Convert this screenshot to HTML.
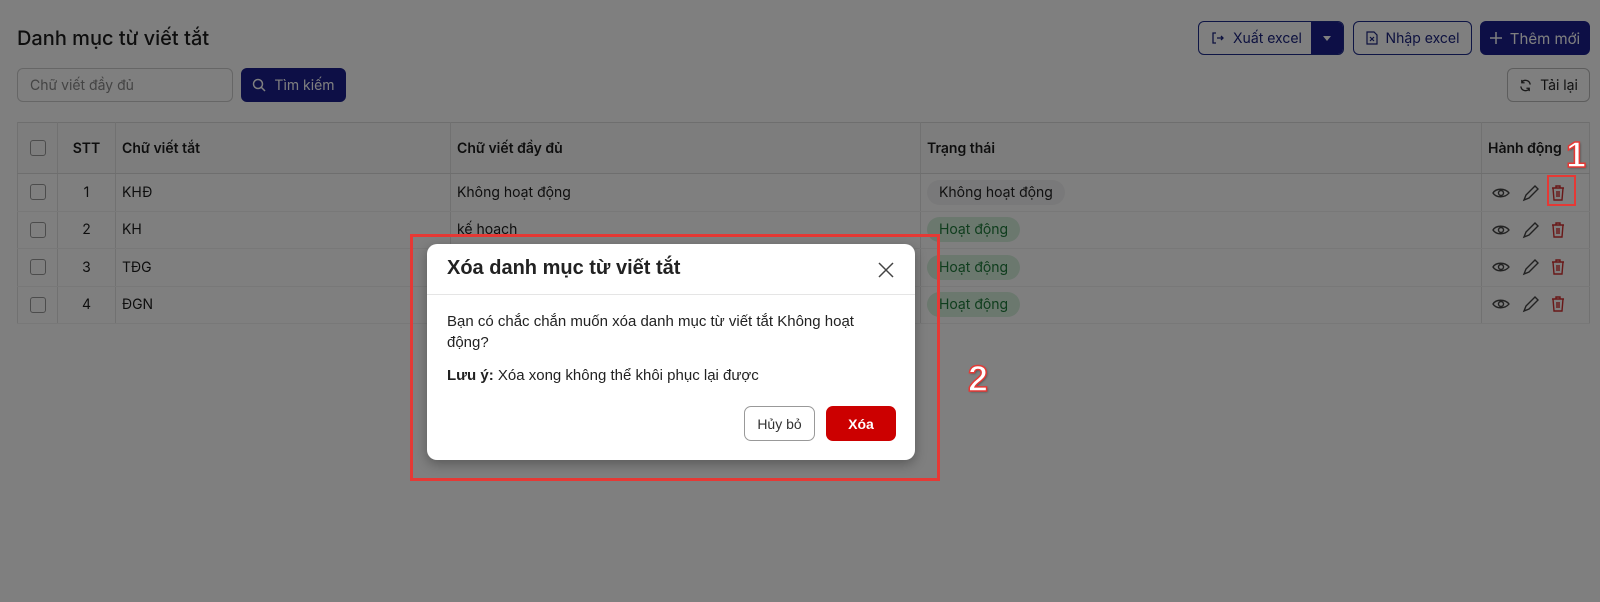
<!DOCTYPE html>
<html><head><meta charset="utf-8"><style>
*{box-sizing:border-box;margin:0;padding:0}
body{width:1600px;height:602px;overflow:hidden;background:#fff;font-family:"Inter","Liberation Sans","DejaVu Sans",sans-serif;color:#1c1c1c;position:relative}
.a{position:absolute}
.btn{position:absolute;border:1px solid #1c2a8a;border-radius:6px;font-size:14px;display:flex;align-items:center;justify-content:center;gap:8px;color:#1a237e}
.navy{background:#1a1f8c;color:#fff;border-color:#1a1f8c}
table{position:absolute;left:17px;top:122px;width:1573px;border-collapse:collapse;font-size:14px}
td,th{border-left:1px solid #e2e2e2;border-right:1px solid #e2e2e2;text-align:left;padding:0 6px}
th{height:51px;font-weight:600;background:#fafafa;border-bottom:1px solid #dcdcdc}
td{height:37.5px;border-bottom:1px solid #f0f0f0}
table{border:1px solid #dcdcdc}
.cb{width:16px;height:16px;border:1.5px solid #999;border-radius:3px;margin:0 auto}
.badge{display:inline-block;padding:4px 12px;border-radius:14px;font-size:14px}
.g{background:#d6f0dc;color:#1e7a3a}
.gr{background:#f2f2f4;color:#222}
.ov{position:absolute;left:0;top:0;width:1600px;height:602px;background:rgba(0,0,0,0.5)}
.num{position:absolute;font-family:"Liberation Sans",sans-serif;font-size:36px;font-weight:900;color:#fff;-webkit-text-stroke:1.5px #e53935;text-shadow:1px 1px 2px rgba(0,0,0,.4)}
</style></head><body>
<div class="a" style="left:17px;top:26px;font-size:20px;font-weight:500">Danh mục từ viết tắt</div>
<div class="a" style="left:17px;top:68px;width:216px;height:34px;border:1px solid #ccc;border-radius:6px;font-size:14px;color:#888;padding:8px 12px">Chữ viết đầy đủ</div>
<div class="btn navy" style="left:241px;top:68px;width:105px;height:34px">
<svg width="14" height="14" viewBox="0 0 14 14" fill="none" stroke="#fff" stroke-width="1.5"><circle cx="6" cy="6" r="4.5"/><path d="M9.5 9.5L13 13"/></svg>Tìm kiếm</div>
<div class="btn" style="left:1198px;top:21px;width:146px;height:34px;justify-content:flex-start;padding-left:12px;overflow:hidden">
<svg width="14" height="14" viewBox="0 0 14 14" fill="none" stroke="#1a237e" stroke-width="1.3"><path d="M5 2H2v10h3M6 7h6M10 5l2 2-2 2"/></svg>Xuất excel
<div class="a navy" style="right:0;top:0;width:32px;height:100%;display:flex;align-items:center;justify-content:center"><svg width="8" height="5"><path d="M0 0h8L4 5z" fill="#fff"/></svg></div></div>
<div class="btn" style="left:1353px;top:21px;width:119px;height:34px">
<svg width="12" height="14" viewBox="0 0 12 14" fill="none" stroke="#1a237e" stroke-width="1.2"><path d="M1 1h7l3 3v9H1z M4 6l4 4M8 6l-4 4"/></svg>Nhập excel</div>
<div class="btn navy" style="left:1480px;top:21px;width:110px;height:34px;font-size:15px">
<svg width="12" height="12" stroke="#fff" stroke-width="1.5"><path d="M6 0v12M0 6h12"/></svg>Thêm mới</div>
<div class="btn" style="left:1507px;top:68px;width:83px;height:34px;border-color:#bbb;color:#222">
<svg width="13" height="13" viewBox="0 0 14 14" fill="none" stroke="#333" stroke-width="1.4"><path d="M12 6A5 5 0 0 0 3 3.5M2 8a5 5 0 0 0 9 2.5M3 1v3h3M11 13v-3H8"/></svg>Tải lại</div>
<table>
<tr><th style="width:40px"><div class="cb"></div></th><th style="width:58px;text-align:center">STT</th><th style="width:335px">Chữ viết tắt</th><th style="width:470px">Chữ viết đầy đủ</th><th style="width:561px">Trạng thái</th><th>Hành động</th></tr>
<tr><td><div class="cb"></div></td><td style="text-align:center">1</td><td>KHĐ</td><td>Không hoạt động</td><td><span class="badge gr">Không hoạt động</span></td><td></td></tr>
<tr><td><div class="cb"></div></td><td style="text-align:center">2</td><td>KH</td><td>kế hoạch</td><td><span class="badge g">Hoạt động</span></td><td></td></tr>
<tr><td><div class="cb"></div></td><td style="text-align:center">3</td><td>TĐG</td><td></td><td><span class="badge g">Hoạt động</span></td><td></td></tr>
<tr><td><div class="cb"></div></td><td style="text-align:center">4</td><td>ĐGN</td><td></td><td><span class="badge g">Hoạt động</span></td><td></td></tr>
</table>
<svg class="a" style="left:1490px;top:180px" width="90" height="140" viewBox="0 0 90 140">
<g id="r" fill="none" stroke-width="1.4">
<path d="M3 13c3-5 12-5 16 0c-4 5-13 5-16 0z" stroke="#444"/><circle cx="11" cy="13" r="2.5" stroke="#444"/>
<path d="M34 20l2-5 9-9 3 3-9 9z" stroke="#444"/>
<path d="M62 8h12M66 8V6h4v2M63 8l1 12h8l1-12M67 11v6M69 11v6" stroke="#d32f2f"/>
</g>
<use href="#r" y="37"/><use href="#r" y="74"/><use href="#r" y="111"/>
</svg>
<div class="ov"></div>
<div class="a" style="left:1547px;top:175px;width:29px;height:31px;border:2px solid #e53935"></div>
<div class="num" style="left:1566px;top:134px">1</div>
<div class="a" style="left:410px;top:234px;width:530px;height:247px;border:3px solid #e53935"></div>
<div class="a" style="left:427px;top:244px;width:488px;height:216px;background:#fff;border-radius:10px;box-shadow:0 4px 12px rgba(0,0,0,.3);font-family:'Liberation Sans',sans-serif">
<div style="height:51px;border-bottom:1px solid #e5e5e5;padding:13px 20px;font-size:20px;font-weight:700;color:#222">Xóa danh mục từ viết tắt</div>
<svg class="a" style="left:451px;top:18px" width="16" height="16" stroke="#444" stroke-width="1.5"><path d="M1 1l14 14M15 1L1 15"/></svg>
<div style="padding:16px 20px 0;font-size:15px;line-height:21px;color:#222">Bạn có chắc chắn muốn xóa danh mục từ viết tắt Không hoạt động?<div style="margin-top:12px"><b>Lưu ý:</b> Xóa xong không thể khôi phục lại được</div></div>
<div class="a" style="left:317px;top:162px;width:71px;height:35px;border:1px solid #999;border-radius:7px;font-size:14px;display:flex;align-items:center;justify-content:center;color:#333">Hủy bỏ</div>
<div class="a" style="left:399px;top:162px;width:70px;height:35px;background:#cc0000;border-radius:7px;font-size:14px;display:flex;align-items:center;justify-content:center;color:#fff;font-weight:700">Xóa</div>
</div>
<div class="num" style="left:968px;top:358px">2</div>
</body></html>
